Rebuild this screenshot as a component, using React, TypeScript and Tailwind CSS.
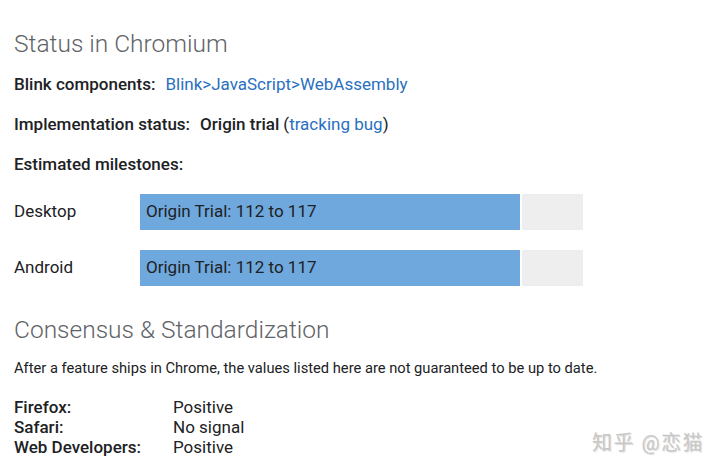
import React from "react";

const rows = [
  ["Firefox:", "Positive"],
  ["Safari:", "No signal"],
  ["Web Developers:", "Positive"],
];

export default function App() {
  return (
    <div
      className="relative w-[720px] h-[471px] overflow-hidden bg-white text-[#202124] pl-[14px]"
      style={{ fontFamily: "Roboto, 'Noto Sans CJK SC', sans-serif" }}
    >
      <h2 className="pt-[28px] text-[24.5px] leading-[32px] font-light text-[#5f6368]">
        Status in Chromium
      </h2>
      <div className="mt-[13px] flex flex-col gap-[17px] text-[17px] leading-[23px]">
        <div className="flex">
          <span className="font-medium">Blink components:</span>
          <span className="ml-[10px] text-[#2a6fc0]">Blink&gt;JavaScript&gt;WebAssembly</span>
        </div>
        <div className="flex">
          <span className="font-medium">Implementation status:</span>
          <span className="ml-[10px] font-medium">Origin trial</span>
          <span className="ml-[4px]">
            (<span className="text-[#2a6fc0]">tracking bug</span>)
          </span>
        </div>
        <div className="font-medium">Estimated milestones:</div>
      </div>
      <div className="mt-[18px] flex flex-col gap-[20px] text-[17px]">
        {["Desktop", "Android"].map((p) => (
          <div key={p} className="flex items-center h-[36px]">
            <span className="w-[126px]">{p}</span>
            <div className="flex h-full gap-[2px]">
              <div className="w-[380px] h-full bg-[#6fa8dc] flex items-center pl-[6px]">
                Origin Trial: 112 to 117
              </div>
              <div className="w-[61px] h-full bg-[#eeeeee]" />
            </div>
          </div>
        ))}
      </div>
      <h2 className="mt-[28px] text-[24.5px] leading-[32px] font-light text-[#5f6368]">
        Consensus &amp; Standardization
      </h2>
      <p className="mt-[12px] text-[14.7px] leading-[20px]">
        After a feature ships in Chrome, the values listed here are not guaranteed to be up to date.
      </p>
      <div className="mt-[19px] flex flex-col text-[17px] leading-[20px]">
        {rows.map(([k, v]) => (
          <div key={k} className="flex">
            <span className="w-[159px] font-medium">{k}</span>
            <span>{v}</span>
          </div>
        ))}
      </div>
      <div
        className="absolute left-[592px] top-[428px] text-[20px] text-[#c8c8c8] tracking-[1.5px]"
        style={{ textShadow: "1px 1px 1px rgba(0,0,0,0.15)" }}
      >
        知乎 @恋猫
      </div>
    </div>
  );
}
